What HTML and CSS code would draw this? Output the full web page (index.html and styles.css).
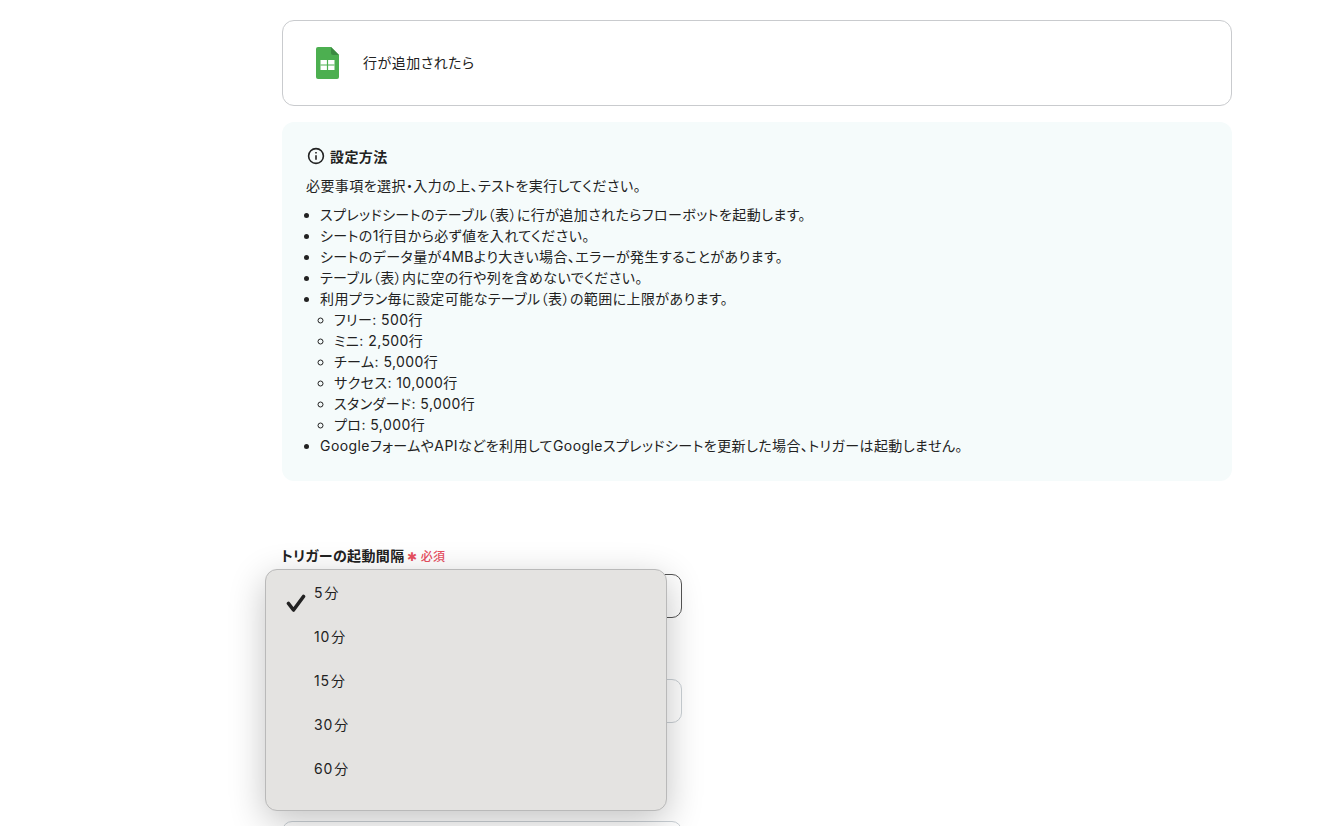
FILE: index.html
```html
<!DOCTYPE html>
<html lang="ja">

<head>
    <meta charset="UTF-8">
    <title>行が追加されたら</title>
    <link rel="stylesheet" href="styles.css">
</head>

<body>
    <div class="page">
        <div class="trigger-card">
            <svg class="sheet-icon" width="23" height="32" viewBox="0 0 23 32">
                <path d="M2 0H15L23 8V30a2 2 0 0 1-2 2H2a2 2 0 0 1-2-2V2a2 2 0 0 1 2-2z" fill="#4caf50" />
                <path d="M15 0L23 8H17a2 2 0 0 1-2-2z" fill="#3b8a41" />
                <path d="M4.500 13H18.500V23H4.500z" fill="#fff" />
                <path d="M4.500 18H18.500M11.500 13V23" stroke="#4caf50" stroke-width="1.200" />
            </svg>
            <span class="trigger-name">行が追加されたら</span>
        </div>

        <div class="info-box">
            <div class="info-title">
                <svg class="info-icon" width="18" height="18" viewBox="0 0 18 18" fill="none" stroke="#222" stroke-width="1.600">
                    <circle cx="9" cy="9" r="7.400" />
                    <path d="M9 8.200V12.800" />
                    <path d="M9 5V6.600" />
                </svg>
                <span>設定方法</span>
            </div>
            <p class="info-lead">必要事項を選択・入力の上、テストを実行してください。</p>
            <ul class="info-list">
                <li>スプレッドシートのテーブル（表）に行が追加されたらフローボットを起動します。</li>
                <li>シートの1行目から必ず値を入れてください。</li>
                <li>シートのデータ量が4MBより大きい場合、エラーが発生することがあります。</li>
                <li>テーブル（表）内に空の行や列を含めないでください。</li>
                <li>利用プラン毎に設定可能なテーブル（表）の範囲に上限があります。
                    <ul>
                        <li>フリー: 500行</li>
                        <li>ミニ: 2,500行</li>
                        <li>チーム: 5,000行</li>
                        <li>サクセス: 10,000行</li>
                        <li>スタンダード: 5,000行</li>
                        <li>プロ: 5,000行</li>
                    </ul>
                </li>
                <li>GoogleフォームやAPIなどを利用してGoogleスプレッドシートを更新した場合、トリガーは起動しません。</li>
            </ul>
        </div>

        <div class="form">
            <label class="field-label">トリガーの起動間隔 <span class="required">✱ 必須</span></label>
            <div class="select-box active"></div>
            <div class="select-box second"></div>
            <div class="select-box third"></div>

            <div class="dropdown">
                <div class="option">
                    <svg class="check" width="20" height="18" viewBox="0 0 20 18" fill="none" stroke="#222" stroke-width="3.600" stroke-linecap="round" stroke-linejoin="round">
                        <path d="M2.500 9.500L7.500 16L17.500 2.500" />
                    </svg>
                    <span>5 分</span>
                </div>
                <div class="option"><span>10 分</span></div>
                <div class="option"><span>15 分</span></div>
                <div class="option"><span>30 分</span></div>
                <div class="option"><span>60 分</span></div>
            </div>
        </div>
    </div>
</body>

</html>
```

FILE: styles.css
```css
html,
body {
    height: 100%;
    overflow: hidden;
}

body {
    margin: 0;
    padding: 0;
    background-color: #fff;
    color: #222;
    font-family: Inter, "Noto Sans CJK JP", sans-serif;
    font-size: 14px;
    letter-spacing: 0.43px;
    font-feature-settings: "palt";
}

.page {
    width: 950px;
    margin-left: 282px;
    padding-top: 20px;
}

.trigger-card {
    display: flex;
    align-items: center;
    gap: 24px;
    height: 84px;
    padding-left: 33px;
    border: 1px solid #c9cbce;
    border-radius: 12px;
}

.sheet-icon {
    flex-shrink: 0;
}

.trigger-name {
    margin-bottom: 2px;
    letter-spacing: 0.5px;
}

.info-box {
    margin-top: 16px;
    height: 359px;
    box-sizing: border-box;
    padding: 23px 24px;
    background-color: #f5fbfb;
    border-radius: 12px;
}

.info-title {
    display: flex;
    align-items: center;
    gap: 5px;
    padding-left: 1px;
    font-weight: 700;
    line-height: 24px;
}

.info-icon {
    margin-bottom: 2px;
}

.info-lead {
    margin: 6px 0 8px;
    line-height: 21px;
}

.info-list {
    margin: 0;
    padding-left: 14px;
    line-height: 21px;
}

.info-list ul {
    margin: 0;
    padding-left: 14px;
}

.form {
    position: relative;
    margin-top: 65px;
}

.field-label {
    display: block;
    margin-left: -1px;
    font-weight: 700;
    line-height: 20px;
    letter-spacing: 0.35px;
}

.required {
    color: #e8505f;
    font-size: 12px;
    font-weight: 500;
    margin-left: -1px;
    letter-spacing: 0.2px;
}

.select-box {
    width: 400px;
    height: 44px;
    box-sizing: border-box;
    margin-top: 7px;
    border: 1px solid #cbd1d6;
    border-radius: 10px;
}

.select-box.active {
    border-color: #555;
}

.select-box.second {
    margin-top: 61px;
}

.select-box.third {
    margin-top: 98px;
}

.dropdown {
    position: absolute;
    left: -17px;
    top: 23px;
    width: 402px;
    height: 242px;
    box-sizing: border-box;
    padding-top: 1px;
    background-color: #e4e3e1;
    border: 1px solid #b9b9b9;
    border-radius: 12px;
    box-shadow: 0 10px 36px rgba(0, 0, 0, 0.24);
}

.option {
    position: relative;
    height: 44px;
    padding-left: 48px;
    line-height: 44px;
    letter-spacing: 0.8px;
    word-spacing: -3.5px;
}

.check {
    position: absolute;
    left: 20px;
    top: 23px;
}
```
